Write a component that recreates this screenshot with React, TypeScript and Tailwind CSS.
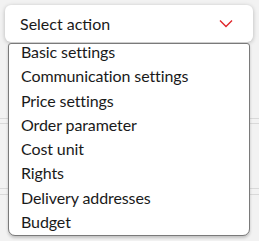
const actions = [
  'Basic settings',
  'Communication settings',
  'Price settings',
  'Order parameter',
  'Cost unit',
  'Rights',
  'Delivery addresses',
  'Budget',
]

export default function App() {
  return (
    <div className="relative h-[241px] w-[259px] overflow-hidden bg-[#f2f2f2] font-['Lato',sans-serif] text-[#1a1a1a]">
      {/* page rows behind the open menu */}
      <div className="flex flex-col">
        <div className="h-[119px] border-b border-[#d9d9d9]" />
        <div className="h-[5px] border-b border-[#d9d9d9]" />
        <div className="h-[65px] border-b border-[#d9d9d9]" />
        <div className="h-[6px] border-b border-[#d9d9d9]" />
      </div>

      {/* select with its open menu */}
      <div className="absolute inset-0 flex flex-col items-start px-[5px] pt-[5px]">
        <button className="flex h-[37px] w-[248px] items-center justify-between rounded-[6px] bg-white pl-[15px] pr-[20px] text-[16px] shadow-[0_1px_4px_rgba(0,0,0,0.25)]">
          <span>Select action</span>
          <svg width="14" height="9" viewBox="0 0 14 9" fill="none">
            <path d="M1 1.5 L7 7.5 L13 1.5" stroke="#e0262b" strokeWidth="1.4" />
          </svg>
        </button>

        <div className="ml-[3px] mt-px w-[242px] rounded-b-[7px] rounded-t-[3px] border border-[#7a7a7a] bg-white pb-[1px] pl-[12px] shadow-[0_2px_3px_rgba(0,0,0,0.2)]">
          <div className="-mt-[4px] flex flex-col">
            {actions.map((a) => (
              <div key={a} className="h-[24.3px] text-[16px] leading-[24.3px] tracking-[-0.1px]">
                {a}
              </div>
            ))}
          </div>
        </div>
      </div>
    </div>
  )
}
